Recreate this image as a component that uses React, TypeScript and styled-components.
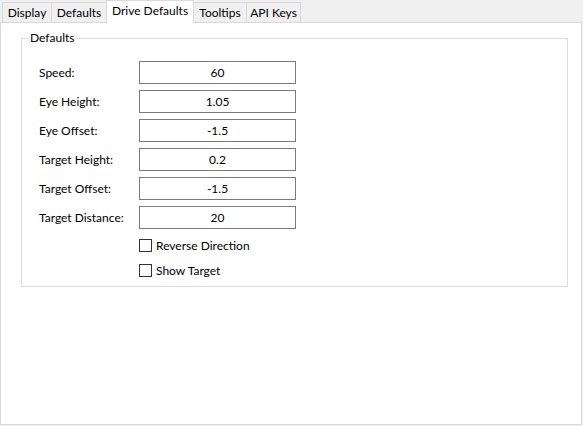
import React from 'react';
import styled, { createGlobalStyle } from 'styled-components';

const GlobalStyle = createGlobalStyle`
  html, body {
    margin: 0;
    padding: 0;
    background: #f0f0f0;
    font-family: Lato, "Noto Sans", sans-serif;
    font-size: 12px;
    color: #000;
  }
`;

const Window = styled.div`
  width: 582px;
  height: 425px;
  display: flex;
  flex-direction: column;
`;

const TabBar = styled.div`
  display: flex;
  align-items: flex-end;
  height: 22px;
  padding-left: 2px;
`;

const Tab = styled.div<{ $width: number; $active?: boolean }>`
  position: relative;
  box-sizing: border-box;
  width: ${(p) => p.$width}px;
  height: ${(p) => (p.$active ? 23 : 20)}px;
  margin-left: -1px;
  margin-bottom: ${(p) => (p.$active ? -1 : 0)}px;
  border: 1px solid #d9d9d9;
  border-bottom: none;
  background: ${(p) => (p.$active ? '#fff' : '#f0f0f0')};
  z-index: ${(p) => (p.$active ? 2 : 0)};
  display: flex;
  align-items: center;
  justify-content: center;
  padding-bottom: ${(p) => (p.$active ? 3 : 0)}px;
  line-height: 16px;
  white-space: nowrap;

  &:first-child {
    margin-left: 0;
  }
`;

const Panel = styled.div`
  position: relative;
  z-index: 1;
  flex: 1;
  box-sizing: border-box;
  border: 1px solid #d9d9d9;
  background: #fff;
  padding: 7px 13px 0 20px;
`;

const GroupBox = styled.fieldset`
  margin: 0;
  padding: 0 0 6px 17px;
  border: 1px solid #dcdcdc;
  min-width: 0;
`;

const Legend = styled.legend`
  margin-left: -10px;
  padding: 0 1px;
  line-height: 16px;
`;

const Form = styled.div`
  display: grid;
  grid-template-columns: 100px 157px;
  grid-auto-rows: 23px;
  row-gap: 6px;
  padding-top: 15px;
`;

const Label = styled.label`
  display: flex;
  align-items: center;
  white-space: nowrap;
`;

const NumberBox = styled.input`
  box-sizing: border-box;
  width: 157px;
  height: 23px;
  margin: 0;
  border: 1px solid #7a7a7a;
  padding: 0 4px;
  font: inherit;
  text-align: center;
  color: #000;
  background: #fff;
  outline: none;
`;

const CheckList = styled.div`
  display: flex;
  flex-direction: column;
  gap: 6px;
  margin-top: 7px;
  padding-left: 100px;
`;

const CheckRow = styled.label`
  display: flex;
  align-items: center;
  gap: 4px;
  height: 19px;
  white-space: nowrap;
`;

const Box = styled.span`
  box-sizing: border-box;
  width: 13px;
  height: 13px;
  border: 1px solid #333;
  background: #fff;
`;

const tabs = [
  { name: 'Display', width: 50 },
  { name: 'Defaults', width: 56 },
  { name: 'Drive Defaults', width: 88, active: true },
  { name: 'Tooltips', width: 54 },
  { name: 'API Keys', width: 55 },
];

const fields = [
  { label: 'Speed:', value: '60' },
  { label: 'Eye Height:', value: '1.05' },
  { label: 'Eye Offset:', value: '-1.5' },
  { label: 'Target Height:', value: '0.2' },
  { label: 'Target Offset:', value: '-1.5' },
  { label: 'Target Distance:', value: '20' },
];

const App: React.FC = () => {
  return (
    <>
      <GlobalStyle />
      <Window>
        <TabBar>
          {tabs.map((t) => (
            <Tab key={t.name} $width={t.width} $active={t.active}>
              {t.name}
            </Tab>
          ))}
        </TabBar>
        <Panel>
          <GroupBox>
            <Legend>Defaults</Legend>
            <Form>
              {fields.map((f) => (
                <React.Fragment key={f.label}>
                  <Label>{f.label}</Label>
                  <NumberBox defaultValue={f.value} />
                </React.Fragment>
              ))}
            </Form>
            <CheckList>
              <CheckRow>
                <Box />
                Reverse Direction
              </CheckRow>
              <CheckRow>
                <Box />
                Show Target
              </CheckRow>
            </CheckList>
          </GroupBox>
        </Panel>
      </Window>
    </>
  );
};

export default App;
